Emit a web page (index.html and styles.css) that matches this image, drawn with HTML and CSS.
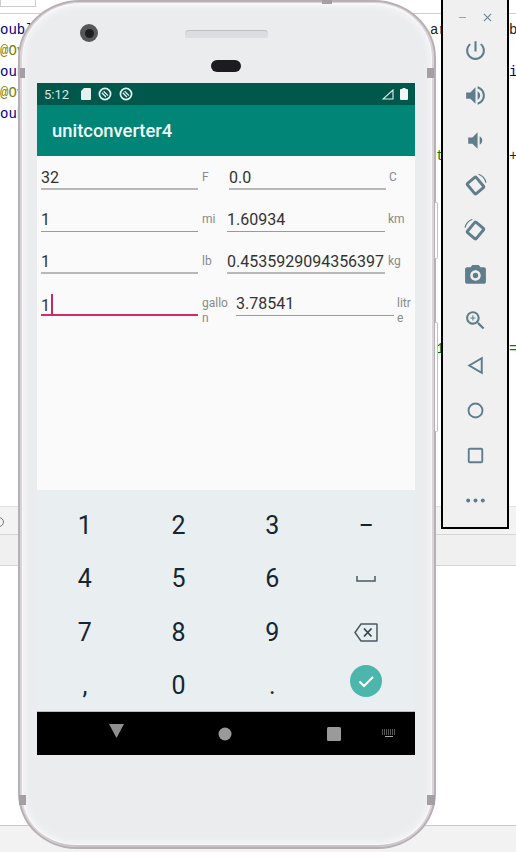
FILE: index.html
```html
<!DOCTYPE html>
<html lang="en">
<head>
    <meta charset="UTF-8">
    <meta name="viewport" content="width=device-width, initial-scale=1.0">
    <title>unitconverter4</title>
    <link rel="stylesheet" href="styles.css">
</head>
<body>
    <!-- IDE behind the emulator -->
    <div class="ide">
        <div class="ide-top"><div class="ide-tab"></div></div>
        <div class="ide-code">
            <div class="code-line"><span class="kw">oubl</span><span>ar</span><span>b</span></div>
            <div class="code-line"><span class="ann">@Ov</span></div>
            <div class="code-line"><span class="kw">oubl</span><span></span><span class="kw">i</span></div>
            <div class="code-line"><span class="ann">@Ov</span></div>
            <div class="code-line"><span class="kw">oubl</span></div>
            <div class="code-line"></div>
            <div class="code-line"><span></span><span class="str code-inset">t</span><span>+</span></div>
            <div class="code-line"></div>
            <div class="code-line"></div>
            <div class="code-line"></div>
            <div class="code-line"></div>
            <div class="code-line"></div>
            <div class="code-line"></div>
            <div class="code-line"></div>
            <div class="code-line"></div>
            <div class="code-line code-line-low"><span></span><span class="str code-inset">1</span><span class="str">=</span></div>
        </div>
        <div class="ide-tool"><div class="ide-tool-dot"></div></div>
        <div class="ide-tool-low"></div>
        <div class="ide-empty"></div>
        <div class="ide-foot"></div>
    </div>

    <!-- phone frame -->
    <div class="phone">
        <div class="side-key side-key-top"></div>
        <div class="side-key side-key-low"></div>
        <div class="seam seam-top"></div>
        <div class="seam seam-left"></div>
        <div class="seam seam-right"></div>
        <div class="seam seam-bottom-left"></div>
        <div class="seam seam-bottom-right"></div>
        <div class="camera"><div class="camera-lens"></div></div>
        <div class="speaker"></div>
        <div class="sensor"></div>

        <div class="screen">
            <div class="status-bar">
                <span class="status-time">5:12</span>
                <svg class="status-sd" viewBox="0 0 10 12"><path d="M3 0h6a1 1 0 0 1 1 1v10a1 1 0 0 1-1 1H1a1 1 0 0 1-1-1V3z" fill="#e6f0ee"/></svg>
                <svg class="status-sync" viewBox="0 0 14 14"><circle cx="7" cy="7" r="5.6" fill="none" stroke="#e6f0ee" stroke-width="1.7"/><path d="M3.8 5.8 8 10M5.6 4.2 10 8.6" fill="none" stroke="#e6f0ee" stroke-width="1.3"/></svg>
                <svg class="status-sync" viewBox="0 0 14 14"><circle cx="7" cy="7" r="5.6" fill="none" stroke="#e6f0ee" stroke-width="1.7"/><path d="M3.8 5.8 8 10M5.6 4.2 10 8.6" fill="none" stroke="#e6f0ee" stroke-width="1.3"/></svg>
                <span class="status-gap"></span>
                <svg class="status-signal" viewBox="0 0 12 11"><path d="M11 1v9H1z" fill="none" stroke="#e6f0ee" stroke-width="1.1"/></svg>
                <svg class="status-battery" viewBox="0 0 8 12"><path d="M2.5 0h3v1H7a1 1 0 0 1 1 1v9a1 1 0 0 1-1 1H1a1 1 0 0 1-1-1V2a1 1 0 0 1 1-1h1.500z" fill="#f2f7f6"/></svg>
            </div>
            <div class="app-bar">unitconverter4</div>

            <div class="content">
                <div class="row row-temp">
                    <div class="field field-soft">32</div>
                    <div class="unit">F</div>
                    <div class="field field-soft">0.0</div>
                    <div class="unit">C</div>
                </div>
                <div class="row row-narrow">
                    <div class="field">1</div>
                    <div class="unit">mi</div>
                    <div class="field">1.60934</div>
                    <div class="unit">km</div>
                </div>
                <div class="row row-narrow">
                    <div class="field field-soft">1</div>
                    <div class="unit">lb</div>
                    <div class="field field-soft">0.4535929094356397</div>
                    <div class="unit">kg</div>
                </div>
                <div class="row row-volume">
                    <div class="field field-active">1<span class="caret"></span></div>
                    <div class="unit">gallon</div>
                    <div class="field">3.78541</div>
                    <div class="unit">litre</div>
                </div>
            </div>

            <div class="keyboard">
                <div class="key">1</div>
                <div class="key">2</div>
                <div class="key">3</div>
                <div class="key key-dash">–</div>
                <div class="key">4</div>
                <div class="key">5</div>
                <div class="key">6</div>
                <div class="key"><svg class="key-space" viewBox="0 0 20 6"><path d="M1 0v5h18V0" fill="none" stroke="#4a5a63" stroke-width="1.5"/></svg></div>
                <div class="key">7</div>
                <div class="key">8</div>
                <div class="key">9</div>
                <div class="key"><svg class="key-back" viewBox="0 0 24 19"><path d="M7 1h15.500a.5.500 0 0 1 .5.500v16a.5.500 0 0 1-.5.500H7L1 9.500z" fill="none" stroke="#4a5a63" stroke-width="1.500"/><path d="M10 5.500l7.500 8M17.500 5.500l-7.500 8" fill="none" stroke="#37474f" stroke-width="1.800"/></svg></div>
                <div class="key">,</div>
                <div class="key">0</div>
                <div class="key">.</div>
                <div class="key"><div class="key-done"><svg viewBox="0 0 32 32"><path d="M9.500 16.500l4.500 4.500 9-9" fill="none" stroke="#fff" stroke-width="2"/></svg></div></div>
            </div>

            <div class="nav-bar">
                <svg class="nav-back" viewBox="0 0 15 14"><path d="M0 0h15L7.500 14z" fill="#8f8f8f"/></svg>
                <svg class="nav-home" viewBox="0 0 14 14"><circle cx="7" cy="7" r="6.500" fill="#9a9a9a"/></svg>
                <svg class="nav-recent" viewBox="0 0 14 14"><rect width="14" height="14" rx="1.500" fill="#9a9a9a"/></svg>
                <svg class="nav-keyboard" viewBox="0 0 16 9"><path d="M1 1h14M1 3h14M1 5h14" fill="none" stroke="#a8a8a8" stroke-dasharray="1 1"/><path d="M4 7.500h8" fill="none" stroke="#a8a8a8"/></svg>
            </div>
        </div>
    </div>

    <!-- emulator toolbar -->
    <div class="toolbar">
        <div class="toolbar-title">
            <span class="toolbar-min"></span>
            <svg class="toolbar-close" viewBox="0 0 10 10"><path d="M1 1l8 8M9 1l-8 8" fill="none" stroke="#6f8794" stroke-width="1.300"/></svg>
        </div>
        <div class="tool"><svg viewBox="0 0 24 24"><path d="M13 3h-2v10h2V3zm4.830 2.170l-1.420 1.420C17.990 7.860 19 9.810 19 12c0 3.870-3.130 7-7 7s-7-3.130-7-7c0-2.190 1.010-4.140 2.580-5.420L6.170 5.170C4.230 6.820 3 9.260 3 12c0 4.970 4.030 9 9 9s9-4.030 9-9c0-2.740-1.230-5.180-3.170-6.830z"/></svg></div>
        <div class="tool"><svg viewBox="0 0 24 24"><path d="M3 9v6h4l5 5V4L7 9H3zm13.500 3c0-1.770-1.020-3.290-2.500-4.030v8.050c1.480-.73 2.500-2.250 2.500-4.020zM14 3.230v2.060c2.890.86 5 3.540 5 6.710s-2.110 5.850-5 6.710v2.060c4.010-.91 7-4.490 7-8.770s-2.990-7.860-7-8.770z"/></svg></div>
        <div class="tool"><svg viewBox="0 0 24 24"><path d="M18.500 12c0-1.770-1.020-3.290-2.500-4.030v8.050c1.480-.73 2.500-2.250 2.500-4.020zM5 9v6h4l5 5V4L9 9H5z"/></svg></div>
        <div class="tool"><svg viewBox="0 0 24 24"><rect x="6.500" y="5.500" width="11" height="13" rx="1" transform="rotate(-40 12 12)" fill="none" stroke="#607d8b" stroke-width="2.800"/><path d="M15 1.200a11 11 0 0 1 7 8" fill="none" stroke="#607d8b" stroke-width="1.200"/></svg></div>
        <div class="tool"><svg viewBox="0 0 24 24"><rect x="6.500" y="5.500" width="11" height="13" rx="1" transform="rotate(40 12 12)" fill="none" stroke="#607d8b" stroke-width="2.800"/><path d="M9 1.200a11 11 0 0 0-7 8" fill="none" stroke="#607d8b" stroke-width="1.200"/></svg></div>
        <div class="tool"><svg viewBox="0 0 24 24"><path d="M9 2 7.170 4H4c-1.100 0-2 .9-2 2v12c0 1.100.9 2 2 2h16c1.100 0 2-.9 2-2V6c0-1.100-.9-2-2-2h-3.170L15 2H9zm3 15c-2.760 0-5-2.240-5-5s2.240-5 5-5 5 2.240 5 5-2.240 5-5 5z"/><circle cx="12" cy="12" r="2.600"/></svg></div>
        <div class="tool"><svg viewBox="0 0 24 24"><path d="M15.500 14h-.79l-.28-.27C15.410 12.590 16 11.110 16 9.500 16 5.910 13.090 3 9.500 3S3 5.910 3 9.500 5.910 16 9.500 16c1.610 0 3.090-.59 4.230-1.570l.27.28v.79l5 4.990L20.490 19l-4.990-5zm-6 0C7.010 14 5 11.990 5 9.500S7.010 5 9.500 5 14 7.010 14 9.500 11.990 14 9.500 14z"/><path d="M12 10h-2v2H9v-2H7V9h2V7h1v2h2v1z"/></svg></div>
        <div class="tool"><svg viewBox="0 0 24 24"><path d="M6 12l12-7v14z" fill="none" stroke="#607d8b" stroke-width="1.900"/></svg></div>
        <div class="tool"><svg viewBox="0 0 24 24"><circle cx="12" cy="12" r="6.700" fill="none" stroke="#607d8b" stroke-width="1.800"/></svg></div>
        <div class="tool"><svg viewBox="0 0 24 24"><rect x="5.500" y="5.500" width="13" height="13" rx="1" fill="none" stroke="#607d8b" stroke-width="1.800"/></svg></div>
        <div class="tool"><svg viewBox="0 0 24 24"><circle cx="5" cy="12" r="1.900"/><circle cx="12" cy="12" r="1.900"/><circle cx="19" cy="12" r="1.900"/></svg></div>
    </div>
</body>
</html>
```

FILE: styles.css
```css
html, body {
    margin: 0;
    padding: 0;
}

body {
    position: relative;
    width: 516px;
    height: 852px;
    overflow: hidden;
    background-color: #fff;
    font-family: Roboto, sans-serif;
}

/* ide backdrop */
.ide {
    display: flex;
    flex-direction: column;
    height: 852px;
}

.ide-top {
    height: 14px;
    flex-shrink: 0;
    border-bottom: 1px solid #cfcfcf;
    box-sizing: border-box;
}

.ide-tab {
    width: 36px;
    height: 7px;
    border: 1px solid #ccc;
    border-top: none;
    box-sizing: border-box;
}

.ide-code {
    height: 492px;
    flex-shrink: 0;
    padding-top: 6px;
    box-sizing: border-box;
    font-family: "Liberation Mono", monospace;
    font-size: 14px;
    color: #222;
}

.code-line {
    display: grid;
    grid-template-columns: 430px 79px 1fr;
    height: 21px;
    line-height: 21px;
}

.code-line-low {
    margin-top: 4px;
}

.code-inset {
    padding-left: 6px;
}

.kw {
    color: #000080;
}

.ann {
    color: #808000;
}

.str {
    color: #008000;
}

.ide-tool {
    height: 29px;
    flex-shrink: 0;
    padding-top: 10px;
    background-color: #f3f3f3;
    border-top: 1px solid #e0e0e0;
    border-bottom: 1px solid #d6d6d6;
    box-sizing: border-box;
}

.ide-tool-dot {
    width: 8px;
    height: 8px;
    margin-left: -6px;
    border: 1px solid #777;
    border-radius: 50%;
}

.ide-tool-low {
    height: 31px;
    flex-shrink: 0;
    background-color: #f0f0f0;
    border-bottom: 1px solid #d6d6d6;
    box-sizing: border-box;
}

.ide-empty {
    flex: 1;
}

.ide-foot {
    height: 27px;
    flex-shrink: 0;
    background-color: #f2f2f2;
    border-top: 1px solid #c8c8c8;
    box-sizing: border-box;
}

/* phone */
.phone {
    position: absolute;
    left: 18px;
    top: 0;
    width: 418px;
    height: 849px;
    box-sizing: border-box;
    padding: 81px 0 0 17px;
    background-color: #ebecee;
    border-radius: 62px 62px 58px 58px / 58px 58px 56px 56px;
    border: 2px solid #b6afb4;
    box-shadow: inset 2px 0 0 #d9d4d7, inset -2px 0 0 #d9d4d7, inset 0 1px 0 #d9d4d7, inset 0 -2px 0 #c9c4c7, inset 0 0 0 3px #f7f7f8, inset 0 0 6px 5px #f5f5f6;
}

.side-key {
    position: absolute;
    right: -4px;
    width: 2px;
    border: 1px solid #c4c0c3;
    border-left: none;
    border-radius: 0 2px 2px 0;
    background-color: #fff;
}

.side-key-top {
    top: 200px;
    height: 55px;
}

.side-key-low {
    top: 320px;
    height: 108px;
}

.seam {
    position: absolute;
    width: 5px;
    height: 10px;
    background-color: #a59ea4;
}

.seam-top {
    left: 302px;
    top: -2px;
    width: 10px;
    height: 4px;
}

.seam-left {
    left: 0;
    top: 66px;
}

.seam-right {
    right: 0;
    top: 66px;
    width: 7px;
}

.seam-bottom-left {
    left: -1px;
    top: 793px;
    width: 7px;
}

.seam-bottom-right {
    right: -1px;
    top: 793px;
    width: 8px;
}

.camera {
    position: absolute;
    left: 60px;
    top: 22px;
    display: flex;
    justify-content: center;
    align-items: center;
    width: 18px;
    height: 18px;
    border-radius: 50%;
    background-color: #55585a;
}

.camera-lens {
    width: 9px;
    height: 9px;
    border-radius: 50%;
    background-color: #1d1e20;
}

.speaker {
    position: absolute;
    left: 165px;
    top: 28px;
    width: 83px;
    height: 8px;
    border-radius: 4px 4px 2px 2px;
    border-top: 1px solid #bfbfc2;
    box-sizing: border-box;
    background-color: #dcdde0;
}

.sensor {
    position: absolute;
    left: 191px;
    top: 58px;
    width: 30px;
    height: 12px;
    border-radius: 6px;
    background-color: #1c1c20;
}

.screen {
    display: flex;
    flex-direction: column;
    width: 378px;
    height: 672px;
}

.status-bar {
    display: flex;
    align-items: center;
    height: 22px;
    flex-shrink: 0;
    padding: 0 7px;
    box-sizing: border-box;
    background-color: #00574b;
    color: #d8e8e5;
    font-size: 13px;
}

.status-time {
    width: 37px;
}

.status-sd {
    width: 10px;
    height: 12px;
    margin-right: 7px;
}

.status-sync {
    width: 14px;
    height: 14px;
    margin-right: 7px;
}

.status-gap {
    flex: 1;
}

.status-signal {
    width: 12px;
    height: 11px;
    margin-right: 6px;
}

.status-battery {
    width: 8px;
    height: 12px;
}

.app-bar {
    height: 51px;
    flex-shrink: 0;
    padding-left: 15px;
    line-height: 51px;
    background-color: #008577;
    color: #f2f8f7;
    font-size: 18.4px;
    font-weight: 500;
}

.content {
    height: 334px;
    flex-shrink: 0;
    background-color: #fafafa;
}

.row {
    display: grid;
    height: 42px;
    padding-left: 4px;
    align-items: start;
}

.row-temp {
    grid-template-columns: 157px 31px 157px 1fr;
}

.row-narrow {
    grid-template-columns: 157px 29px 158px 1fr;
}

.row-volume {
    grid-template-columns: 157px 38px 158px 1fr;
}

.field {
    height: 34px;
    box-sizing: border-box;
    padding-top: 12px;
    border-bottom: 1px solid #9a9a9a;
    overflow: hidden;
    white-space: nowrap;
    font-size: 16px;
    line-height: 19px;
    color: #333;
}

.field-soft {
    border-bottom: 2px solid #b8b8b8;
}

.field-active {
    border-bottom: 2px solid #d42a6a;
}

.caret {
    display: inline-block;
    width: 2px;
    height: 22px;
    margin-left: 1px;
    vertical-align: -5px;
    background-color: #c2286a;
}

.unit {
    padding: 14px 4px 0 4px;
    font-size: 12px;
    line-height: 15px;
    color: #8a8a8a;
    word-break: break-all;
}

.unit:last-child {
    padding: 14px 0 0 3px;
}

.keyboard {
    display: grid;
    grid-template-columns: repeat(4, 1fr);
    grid-auto-rows: 53.3px;
    height: 221px;
    flex-shrink: 0;
    padding: 9px 2px 0 1px;
    box-sizing: border-box;
    background-color: #e9eef1;
}

.key {
    display: flex;
    justify-content: center;
    align-items: center;
    font-size: 25px;
    color: #14262f;
}

.key-dash {
    font-size: 22px;
    font-weight: 500;
}

.key-space {
    width: 20px;
    height: 6px;
}

.key-back {
    width: 24px;
    height: 19px;
}

.key-done {
    display: flex;
    justify-content: center;
    align-items: center;
    width: 32px;
    height: 32px;
    margin-bottom: 9px;
    border-radius: 50%;
    background-color: #4db6ac;
}

.key-done svg {
    width: 32px;
    height: 32px;
}

.nav-bar {
    display: grid;
    grid-template-columns: 109px 109px 109px 1fr;
    justify-items: center;
    align-items: center;
    height: 44px;
    flex-shrink: 0;
    padding-left: 24px;
    box-sizing: border-box;
    background-color: #000;
    border-top: 1px solid #bcbcbc;
}

.nav-back {
    width: 15px;
    height: 14px;
    margin: 0 0 5px 2px;
}

.nav-home,
.nav-recent {
    width: 14px;
    height: 14px;
}

.nav-keyboard {
    justify-self: start;
    width: 16px;
    height: 9px;
    margin-left: -7px;
}

/* emulator toolbar */
.toolbar {
    position: absolute;
    left: 441px;
    top: -2px;
    display: flex;
    flex-direction: column;
    align-items: center;
    width: 68px;
    height: 531px;
    box-sizing: border-box;
    padding-top: 9px;
    background-color: #f0f0f0;
    border: 2px solid #000;
}

.toolbar-title {
    display: flex;
    justify-content: space-between;
    align-items: center;
    width: 33px;
    height: 16px;
    margin-bottom: 3px;
}

.toolbar-min {
    width: 7px;
    height: 1px;
    background-color: #9aa5ab;
}

.toolbar-close {
    width: 9px;
    height: 9px;
}

.tool {
    display: flex;
    justify-content: center;
    align-items: center;
    width: 25px;
    height: 45px;
    flex-shrink: 0;
}

.tool svg {
    width: 25px;
    height: 25px;
    fill: #607d8b;
}
```
